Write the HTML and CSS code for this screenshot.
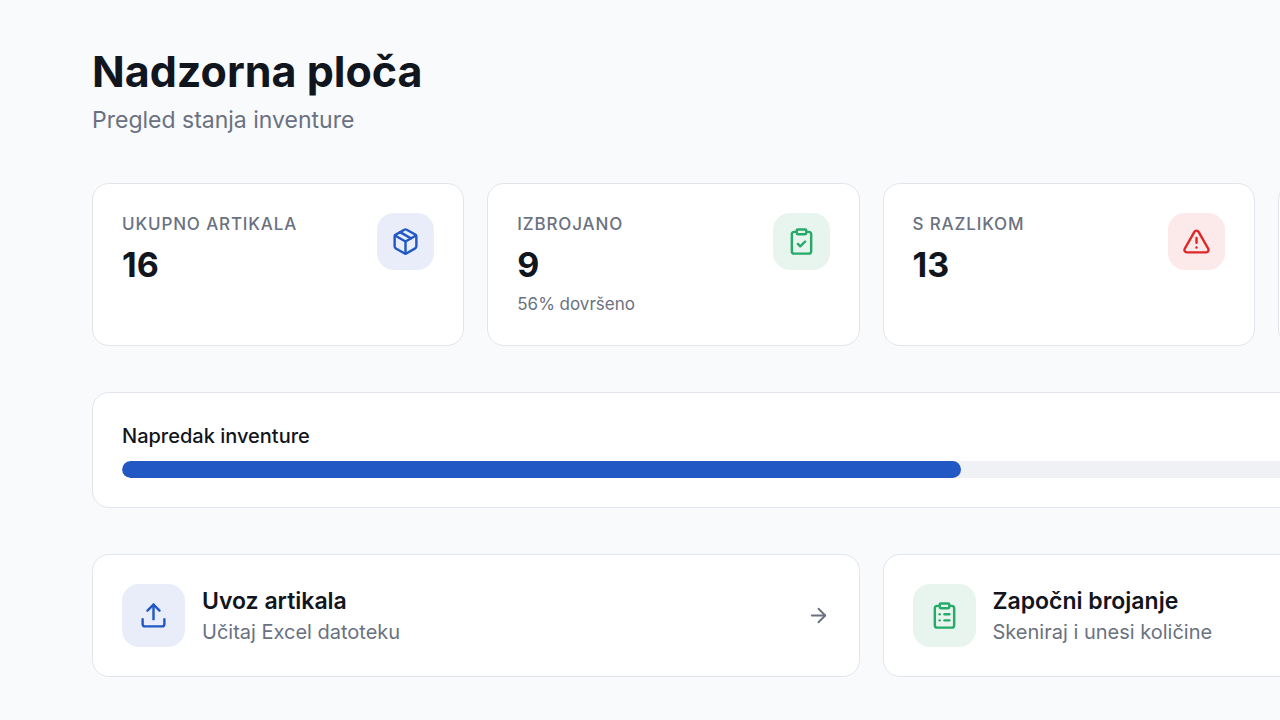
FILE: index.html
```html
<!DOCTYPE html>
<html lang="hr">
<head>
<meta charset="utf-8">
<meta name="viewport" content="width=device-width, initial-scale=1">
<title>Nadzorna ploča</title>
<link rel="stylesheet" href="styles.css">
</head>
<body>
<main class="dashboard">
  <header class="heading">
    <h1 class="title">Nadzorna ploča</h1>
    <p class="subtitle">Pregled stanja inventure</p>
  </header>

  <section class="stats">
    <article class="card stat">
      <div class="stat-text">
        <p class="label">Ukupno artikala</p>
        <p class="value">16</p>
      </div>
      <span class="badge blue">
        <svg class="icon" viewBox="0 0 24 24" aria-hidden="true"><path d="M11 21.73a2 2 0 0 0 2 0l7-4A2 2 0 0 0 21 16V8a2 2 0 0 0-1-1.73l-7-4a2 2 0 0 0-2 0l-7 4A2 2 0 0 0 3 8v8a2 2 0 0 0 1 1.73z"/><path d="M12 22V12"/><path d="m3.3 7 8.7 5 8.7-5"/><path d="m7.5 4.27 9 5.15"/></svg>
      </span>
    </article>
    <article class="card stat">
      <div class="stat-text">
        <p class="label">Izbrojano</p>
        <p class="value">9</p>
        <p class="note">56% dovršeno</p>
      </div>
      <span class="badge green">
        <svg class="icon" viewBox="0 0 24 24" aria-hidden="true"><rect x="8" y="2" width="8" height="4" rx="1"/><path d="M16 4h2a2 2 0 0 1 2 2v14a2 2 0 0 1-2 2H6a2 2 0 0 1-2-2V6a2 2 0 0 1 2-2h2"/><path d="m9 14 2 2 4-4"/></svg>
      </span>
    </article>
    <article class="card stat">
      <div class="stat-text">
        <p class="label">S razlikom</p>
        <p class="value">13</p>
      </div>
      <span class="badge red">
        <svg class="icon" viewBox="0 0 24 24" aria-hidden="true"><path d="m21.73 18-8-14a2 2 0 0 0-3.48 0l-8 14A2 2 0 0 0 4 21h16a2 2 0 0 0 1.73-3"/><path d="M12 9v4"/><path d="M12 17h.01"/></svg>
      </span>
    </article>
    <article class="card stat"></article>
  </section>

  <section class="card progress">
    <h2 class="progress-title" id="progress-title">Napredak inventure</h2>
    <div class="track" role="progressbar" aria-labelledby="progress-title" aria-valuenow="56" aria-valuemin="0" aria-valuemax="100">
      <div class="fill" style="width: 56%"></div>
    </div>
  </section>

  <nav class="actions">
    <a class="card action" href="#uvoz">
      <span class="badge large blue">
        <svg class="icon" viewBox="0 0 24 24" aria-hidden="true"><path d="M12 3v12"/><path d="m17 8-5-5-5 5"/><path d="M21 15v4a2 2 0 0 1-2 2H5a2 2 0 0 1-2-2v-4"/></svg>
      </span>
      <span class="action-text">
        <span class="action-title">Uvoz artikala</span>
        <span class="action-note">Učitaj Excel datoteku</span>
      </span>
      <svg class="arrow" viewBox="0 0 24 24" aria-hidden="true"><path d="M5 12h14"/><path d="m12 5 7 7-7 7"/></svg>
    </a>
    <a class="card action" href="#brojanje">
      <span class="badge large green">
        <svg class="icon" viewBox="0 0 24 24" aria-hidden="true"><rect x="8" y="2" width="8" height="4" rx="1"/><path d="M16 4h2a2 2 0 0 1 2 2v14a2 2 0 0 1-2 2H6a2 2 0 0 1-2-2V6a2 2 0 0 1 2-2h2"/><path d="M12 11h4"/><path d="M12 16h4"/><path d="M8 11h.01"/><path d="M8 16h.01"/></svg>
      </span>
      <span class="action-text">
        <span class="action-title">Započni brojanje</span>
        <span class="action-note">Skeniraj i unesi količine</span>
      </span>
      <svg class="arrow" viewBox="0 0 24 24" aria-hidden="true"><path d="M5 12h14"/><path d="m12 5 7 7-7 7"/></svg>
    </a>
  </nav>
</main>
</body>
</html>
```

FILE: styles.css
```css
* {
  box-sizing: border-box;
}

body {
  margin: 0;
  overflow-x: hidden;
  background: #f9fafc;
  color: #11151d;
  font-family: Inter, "Liberation Sans", sans-serif;
}

h1, h2, p {
  margin: 0;
}

.dashboard {
  display: flex;
  flex-direction: column;
  gap: 46px;
  min-width: 1742px;
  padding: 46px 92px 43px;
}

.title {
  font-size: 43px;
  line-height: 51px;
  font-weight: 700;
}

.subtitle {
  margin-top: 6px;
  color: #6a7181;
  font-size: 23px;
  line-height: 34px;
}

.card {
  background: #fff;
  border: 1px solid #e2e5eb;
  border-radius: 17px;
  padding: 29px;
}

.stats {
  display: grid;
  grid-template-columns: repeat(4, 1fr);
  gap: 23px;
}

.stat {
  display: flex;
  justify-content: space-between;
  align-items: flex-start;
}

.label {
  color: #6a7181;
  font-size: 17px;
  line-height: 23px;
  font-weight: 500;
  letter-spacing: 0.05em;
  text-transform: uppercase;
}

.value {
  margin-top: 6px;
  font-size: 34px;
  line-height: 46px;
  font-weight: 700;
}

.note {
  margin-top: 5px;
  color: #6a7181;
  font-size: 17px;
  line-height: 23px;
}

.badge {
  display: flex;
  flex: none;
  align-items: center;
  justify-content: center;
  width: 57px;
  height: 57px;
  border-radius: 17px;
}

.large {
  width: 63px;
  height: 63px;
}

.blue {
  background: #e8edf9;
  color: #2158c4;
}

.green {
  background: #e8f5ee;
  color: #26aa6a;
}

.red {
  background: #fce9e9;
  color: #df2626;
}

.icon,
.arrow {
  flex: none;
  width: 29px;
  height: 29px;
  fill: none;
  stroke: currentColor;
  stroke-width: 2;
  stroke-linecap: round;
  stroke-linejoin: round;
}

.arrow {
  width: 23px;
  height: 23px;
  color: #6a7181;
}

.progress-title {
  margin-bottom: 10px;
  font-size: 20px;
  line-height: 29px;
  font-weight: 500;
}

.track {
  height: 17px;
  overflow: hidden;
  border-radius: 9px;
  background: #f0f1f4;
}

.fill {
  height: 100%;
  border-radius: 9px;
  background: #2158c4;
}

.actions {
  display: grid;
  grid-template-columns: repeat(2, 1fr);
  gap: 23px;
}

.action {
  display: flex;
  align-items: center;
  gap: 17px;
  color: inherit;
  text-decoration: none;
}

.action-text {
  display: flex;
  flex: 1;
  flex-direction: column;
}

.action-title {
  font-size: 23px;
  line-height: 34px;
  font-weight: 600;
}

.action-note {
  color: #6a7181;
  font-size: 20px;
  line-height: 29px;
}
```
